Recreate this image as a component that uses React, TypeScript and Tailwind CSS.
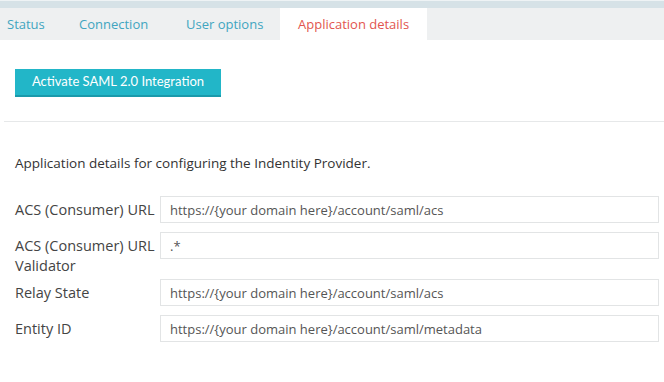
import React from "react";

// Tabs along the top of the SAML settings panel
const tabs = [
  { label: "Status", w: "w-[79px] pl-[7px]" },
  { label: "Connection", w: "w-[107px]" },
  { label: "User options", w: "w-[94px]" },
];

// Rows of the identity provider form
const fields = [
  { label: "ACS (Consumer) URL", value: "https://{your domain here}/account/saml/acs" },
  { label: "ACS (Consumer) URL Validator", value: ".*" },
  { label: "Relay State", value: "https://{your domain here}/account/saml/acs" },
  { label: "Entity ID", value: "https://{your domain here}/account/saml/metadata" },
];

const App: React.FC = () => {
  return (
    <div className="w-[664px] h-[382px] bg-white overflow-hidden font-['Open_Sans',sans-serif]">
      {/* TOP STRIP */}
      <div className="h-[1px] bg-[#eef3f5]" />
      <div className="h-[7px] bg-[#d6e2e7]" />

      {/* TABS */}
      <div className="flex h-[32px] bg-[#eef0f1] text-[13px]">
        {tabs.map((t) => (
          <div key={t.label} className={`flex items-center shrink-0 pt-[2px] text-[#41a5c0] ${t.w}`}>
            {t.label}
          </div>
        ))}
        <div className="flex items-center shrink-0 w-[147px] bg-white pl-[18px] pt-[2px] text-[#e2554e]">
          Application details
        </div>
      </div>

      {/* BODY */}
      <div className="pt-[28px]">
        <button className="ml-[15px] h-[28px] w-[206px] bg-[#22b6c8] border-b-2 border-[#1a9aab] text-white text-[13px] font-['Lato',sans-serif]">
          Activate SAML 2.0 Integration
        </button>
      </div>

      <div className="ml-[4px] mt-[24px] h-px bg-[#e6e8e9]" />

      <p className="px-[15px] mt-[31px] text-[13.5px] text-[#333]">
        Application details for configuring the Indentity Provider.
      </p>

      <div className="mt-[23px] pl-[15px] pr-[5px]">
        {fields.map((f) => (
          <div key={f.label} className="flex items-start">
            <label className="w-[145px] shrink-0 pt-[4px] pb-[3px] leading-[20px] text-[14.5px] text-[#444] whitespace-pre-line">
              {f.label.replace(" Validator", "\nValidator")}
            </label>
            <div className="flex-1 mb-[9px]">
              <input
                readOnly
                value={f.value}
                className="w-full h-[27px] border border-[#e2e4e5] bg-white px-[9px] text-[13px] text-[#555] outline-none font-['Open_Sans',sans-serif]"
              />
            </div>
          </div>
        ))}
      </div>
    </div>
  );
};

export default App;
